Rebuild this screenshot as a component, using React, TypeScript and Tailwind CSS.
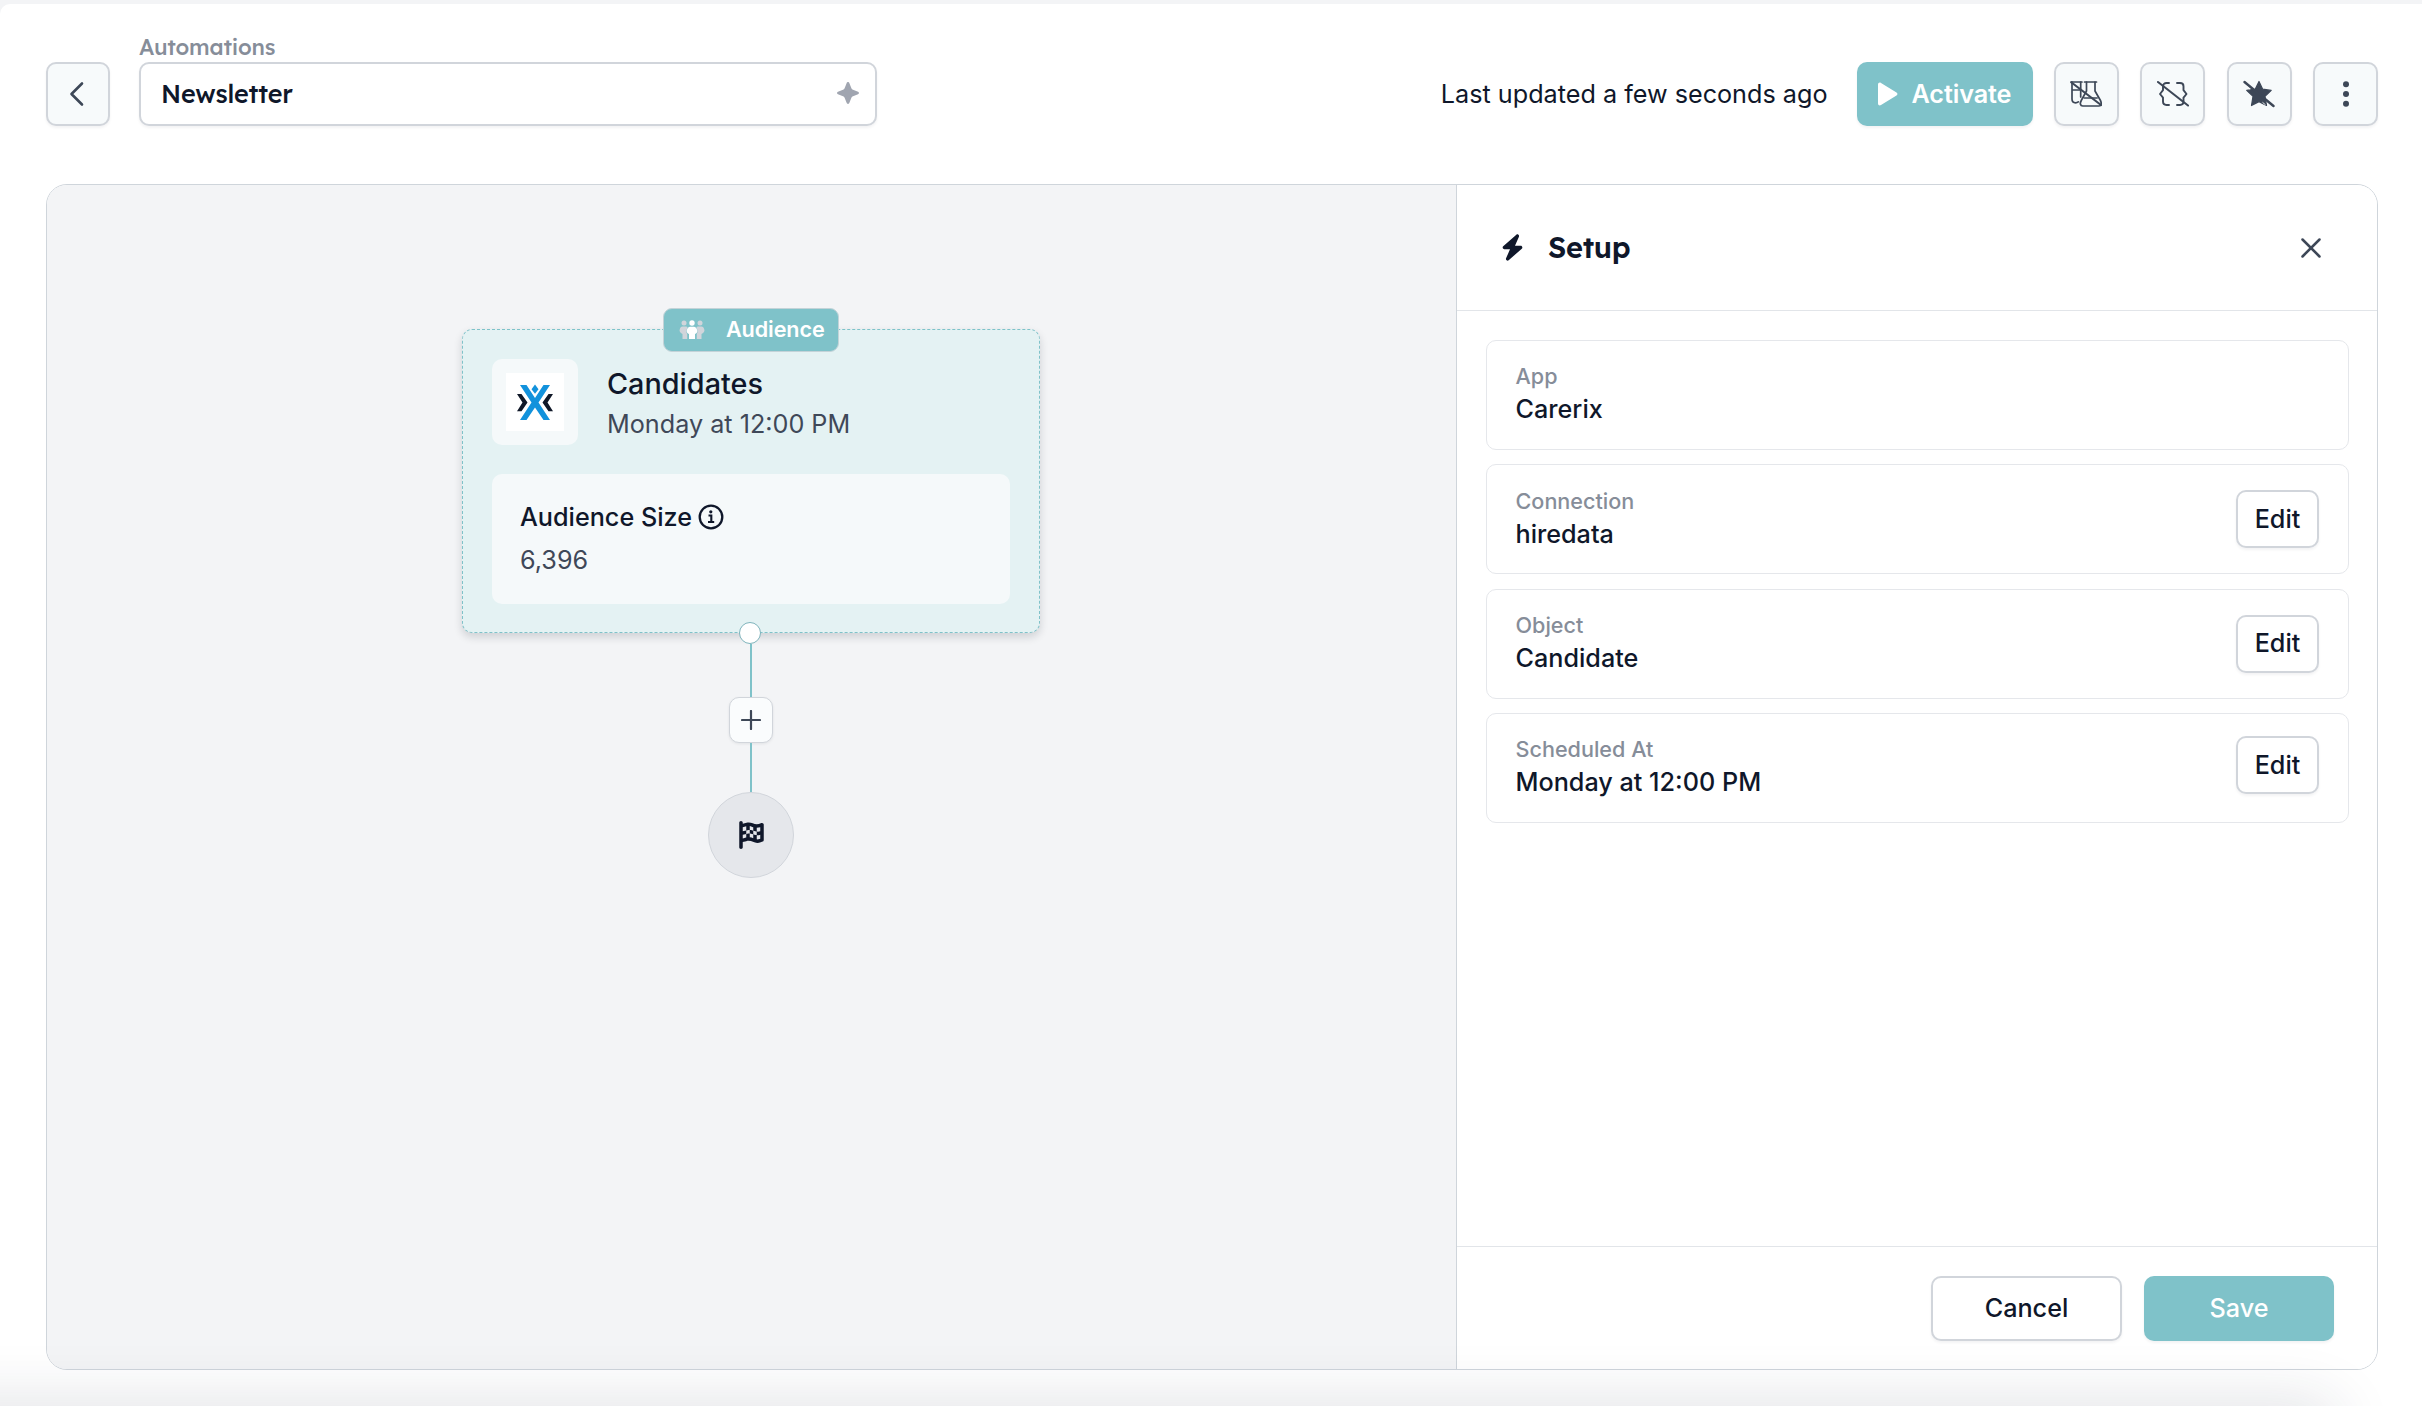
import React from "react";
import { FaBolt, FaFlagCheckered } from "react-icons/fa6";

const LEXEND = "font-['Lexend','Inter',sans-serif] [font-feature-settings:'cv11','ss03']";

function ToolButton({ children, label }: { children: React.ReactNode; label: string }) {
  return (
    <button
      aria-label={label}
      className="flex h-[64px] w-[65px] shrink-0 items-center justify-center rounded-[10px] border-2 border-[#d1d5db] bg-[#f7fafb] text-[#3d4757] shadow-[0_2px_3px_rgba(16,24,40,0.05)]"
    >
      {children}
    </button>
  );
}

function VialsSlash() {
  return (
    <svg width="32" height="28" viewBox="0 0 32 28" fill="none" stroke="currentColor" strokeWidth="1.7" strokeLinecap="round" strokeLinejoin="round">
      <path d="M1 2h11M14.5 2h12" />
      <path d="M2 2v17c0 2.5 1.5 3.800 3.600 3.800 1.200 0 2-.3 2.700-.9M10.700 2v15M2 10h8.700" />
      <path d="M16.500 2v9l-5 9c-2 3.500-1.200 6 1.200 6h16.300c2.300 0 3-2.500 1.200-6l-5.200-9V2M14.500 18h12.500" />
      <path d="M1.500 2.500L31 25" strokeWidth="2.200" />
    </svg>
  );
}

function BracesSlash() {
  return (
    <svg width="32" height="28" viewBox="0 0 32 28" fill="none" stroke="currentColor" strokeWidth="1.9" strokeLinecap="round" strokeLinejoin="round">
      <path d="M12 3H9.500C7.500 3 6 4.200 6 6.200v4L3 14l3 3.600v4C6 24 7.300 25 9.500 25H12" />
      <path d="M20 3h3c2 0 3.500 1.200 3.500 3.200v4L29.500 14l-3 3.600v4c0 2.400-1.300 3.400-3.500 3.400h-3" />
      <path d="M1 2l30 23.500" strokeWidth="2.100" />
    </svg>
  );
}

function StarSlash() {
  return (
    <svg width="32" height="28" viewBox="0 0 32 28" fill="currentColor">
      <path
        d="M16 1.500l3.700 7.700 8.500 1.200-6.200 5.900 1.500 9.200L16 21.800l-7.500 3.700L10 16.300 3.700 10.400l8.500-1.200z"
        stroke="currentColor"
        strokeWidth="1.200"
        strokeLinejoin="round"
      />
      <path d="M1.500 2l29 24" stroke="currentColor" strokeWidth="2.400" strokeLinecap="round" />
      <path d="M2 5.200l5 4M19.500 22.300l3 2.500" stroke="#f7fafb" strokeWidth="0.900" />
    </svg>
  );
}

function People() {
  return (
    <svg width="26" height="20" viewBox="0 0 26 20">
      <g fill="#d1d5db">
        <circle cx="5" cy="3" r="2.500" />
        <path d="M3.500 6.500h4l1.300 1.300C7 10 7.200 12.500 8.200 14v5H3.500v-5C1 13 0 11 .8 9.300 1.300 7.500 2 6.500 3.500 6.500z" />
        <circle cx="21" cy="3" r="2.500" />
        <path d="M22.500 6.500h-4l-1.300 1.300c1.800 2.200 1.600 4.700.6 6.200v5h4.700v-5c2.500-1 3.500-3 2.700-4.700-.5-1.800-1.200-2.800-2.700-2.800z" />
      </g>
      <g fill="#ffffff">
        <circle cx="13" cy="3" r="2.700" />
        <path d="M11.300 6.700h3.400c2 0 3.300 2 3.600 4 .2 1.500-.8 2.600-2.300 3.300v5h-6v-5c-1.500-.7-2.500-1.800-2.300-3.300.3-2 1.600-4 3.600-4z" />
      </g>
    </svg>
  );
}

function Logo() {
  return (
    <svg width="58" height="58" viewBox="0 0 58 58">
      <path d="M14 12h6.500L29 25l8.500-13H44L32.500 29.500 44 47h-6.500L29 34.500 20.500 47H14l11.500-17.500z" fill="#1292dc" />
      <path d="M29 11.500l3.500 4.700L29 20.800l-3.500-4.600z" fill="#1292dc" />
      <path d="M11 21h4.500l6 8.600-6 8.600H11l5.500-8.600zM47 21h-4.500l-6 8.600 6 8.600H47l-5.500-8.600z" fill="#101828" />
    </svg>
  );
}

function Header() {
  return (
    <header className="flex h-[122px] items-end pr-[44px] pl-[46px]">
      <button
        aria-label="Back"
        className="flex h-[64px] w-[64px] items-center justify-center rounded-[10px] border-2 border-[#d1d5db] bg-[#f7fafb] pr-[3px] text-[#3d4757] shadow-[0_2px_3px_rgba(16,24,40,0.05)]"
      >
        <svg width="16" height="26" viewBox="0 0 16 26" fill="none" stroke="currentColor" strokeWidth="2.600" strokeLinecap="round" strokeLinejoin="round">
          <path d="M13 2.500L2.500 13l10.500 10.500" />
        </svg>
      </button>
      <div className="ml-[29px] w-[738px]">
        <div className={`${LEXEND} h-[28px] text-[22px] leading-[26px] font-medium tracking-[-0.2px] text-[#868d99]`}>Automations</div>
        <div className="flex h-[64px] items-center justify-between rounded-[10px] border-2 border-[#d1d5db] bg-white pr-[16px] pl-[20px] shadow-[0_2px_3px_rgba(16,24,40,0.05)]">
          <span className={`${LEXEND} text-[25.2px] font-medium tracking-[-0.15px] text-[#0f172a]`}>Newsletter</span>
          <svg width="22" height="22" viewBox="0 0 22 22" fill="#a0a5b0" className="mb-[3px]">
            <path d="M11 0c.8 0 1.200.6 1.500 1.400l2 5 .9 1.100 5 2c1 .4 1.600.8 1.600 1.500s-.6 1.100-1.600 1.500l-5 2-.9 1.100-2 5c-.3.800-.7 1.400-1.500 1.400s-1.200-.6-1.500-1.400l-2-5-.9-1.100-5-2C.6 12.100 0 11.700 0 11s.6-1.100 1.600-1.500l5-2 .9-1.100 2-5C9.800.6 10.200 0 11 0z" />
          </svg>
        </div>
      </div>
      <div className="ml-auto flex items-center">
        <span className="mr-[29px] pt-[2px] text-[25.2px] whitespace-nowrap text-[#0f172a]">Last updated a few seconds ago</span>
        <button className="mr-[21px] flex h-[64px] w-[176px] items-center rounded-[10px] bg-[#7fc2c9] pl-[21px] text-[25.2px] font-semibold text-white shadow-[0_2px_3px_rgba(16,24,40,0.05)]">
          <svg width="20" height="24" viewBox="0 0 20 24" fill="currentColor" className="mr-[14px]">
            <path d="M0 2.500C0 .8 1.600 0 3 .9l15.500 9.700c1.300.8 1.300 2 0 2.800L3 23.100c-1.400.9-3 .1-3-1.600z" />
          </svg>
          <span className="pt-[1px] tracking-[-0.1px]">Activate</span>
        </button>
        <div className="flex gap-[21.500px]">
          <ToolButton label="Test mode off">
            <VialsSlash />
          </ToolButton>
          <ToolButton label="Variables off">
            <BracesSlash />
          </ToolButton>
          <ToolButton label="Not a favorite">
            <StarSlash />
          </ToolButton>
          <ToolButton label="More">
            <svg width="8" height="26" viewBox="0 0 8 26" fill="currentColor">
              <circle cx="4" cy="3.200" r="3" />
              <circle cx="4" cy="13" r="3" />
              <circle cx="4" cy="22.800" r="3" />
            </svg>
          </ToolButton>
        </div>
      </div>
    </header>
  );
}

function Canvas() {
  return (
    <section className="flex w-[1409px] shrink-0 flex-col items-center bg-[#f3f4f6] pt-[144px] pr-[1px]">
      <div className="relative h-[304px] w-[578px] rounded-[10px] border border-dashed border-[#7fc2c9] bg-[#e4f2f3] px-[29px] pt-[29px] shadow-[0_4px_8px_rgba(16,24,40,0.16)]">
        <div className="absolute top-[-22px] left-[200px] flex h-[44px] w-[176px] items-center rounded-[9px] border border-[#c3d3d8] bg-[#7fc2c9] pl-[15px] text-[21.600px] font-semibold text-white">
          <People />
          <span className="ml-[21px] pb-[2px] tracking-[-0.1px]">Audience</span>
        </div>
        <div className="flex">
          <div className="flex h-[86px] w-[86px] items-center justify-center rounded-[10px] bg-[#f5f9fa]">
            <div className="bg-white">
              <Logo />
            </div>
          </div>
          <div className="ml-[29px] pt-[5px]">
            <div className="text-[28.800px] leading-[40px] font-medium text-[#0f172a]">Candidates</div>
            <div className="text-[25.200px] leading-[40px] text-[#3f4858]">Monday at 12:00 PM</div>
          </div>
        </div>
        <div className="mt-[29px] h-[130px] w-[518px] rounded-[10px] bg-[#f5f9fa] px-[28px] pt-[22px]">
          <div className="flex items-center text-[25.200px] leading-[42px] font-medium text-[#0f172a]">
            Audience Size
            <svg width="26" height="26" viewBox="0 0 26 26" fill="none" stroke="currentColor" className="ml-[6px]">
              <circle cx="13" cy="13" r="11.300" strokeWidth="2.300" />
              <path d="M10.500 11.500h2.800v6.300M10 18h6.200" strokeWidth="2.100" />
              <circle cx="12.800" cy="7.800" r="1.600" fill="currentColor" stroke="none" />
            </svg>
          </div>
          <div className="text-[25.200px] leading-[45px] text-[#3f4858]">6,396</div>
        </div>
        <div className="absolute bottom-[-12px] left-[276px] h-[22px] w-[22px] rounded-full border border-[#7fb4bc] bg-white" />
      </div>
      <div className="mt-[11px] h-[53px] w-[2px] bg-[#7fc2c9]" />
      <div className="flex h-[46px] w-[44px] items-center justify-center rounded-[10px] border-[1.500px] border-[#d1d5db] bg-[#fafcfd] shadow-[0_1px_3px_rgba(16,24,40,0.08)]">
        <svg width="20" height="20" viewBox="0 0 20 20" stroke="#3d4757" strokeWidth="2.200" strokeLinecap="round">
          <path d="M10 1v18M1 10h18" />
        </svg>
      </div>
      <div className="h-[49px] w-[2px] bg-[#7fc2c9]" />
      <div className="flex h-[86px] w-[86px] items-center justify-center rounded-full border border-[#d1d5db] bg-[#e5e7eb]">
        <FaFlagCheckered className="h-[28px] w-[25px] text-[#0f172a]" />
      </div>
    </section>
  );
}

type Row = { label: string; value: string; button?: string };

const rows: Row[] = [
  { label: "App", value: "Carerix" },
  { label: "Connection", value: "hiredata", button: "mt-[25px]" },
  { label: "Object", value: "Candidate", button: "mt-[25px]" },
  { label: "Scheduled At", value: "Monday at 12:00 PM", button: "mt-[22px]" },
];

function SetupPanel() {
  return (
    <aside className="flex flex-1 flex-col border-l border-[#cfd5db] bg-white">
      <div className="flex h-[126px] items-center border-b border-[#e2e5e9] pr-[56px] pl-[44px] text-[#0f172a]">
        <FaBolt className="h-[29px] w-[23px]" />
        <h2 className={`${LEXEND} ml-[24px] text-[29px] font-semibold tracking-[-0.3px]`}>Setup</h2>
        <svg width="20" height="20" viewBox="0 0 20 20" className="ml-auto" stroke="#3d4757" strokeWidth="2.500" strokeLinecap="round">
          <path d="M1.500 1.500l17 17M18.500 1.500l-17 17" />
        </svg>
      </div>
      <div className="flex flex-1 flex-col gap-[14.400px] pt-[29px] pr-[28px] pl-[29px]">
        {rows.map((row) => (
          <div key={row.label} className="flex h-[110px] items-start justify-between rounded-[10px] border border-[#e5e7eb] pr-[29px] pl-[28.500px]">
            <div className="pt-[21.300px]">
              <div className="text-[21.600px] leading-[29px] font-medium text-[#868d99]">{row.label}</div>
              <div className="text-[25.200px] leading-[36px] font-medium text-[#0f172a]">{row.value}</div>
            </div>
            {row.button && (
              <button
                className={`${row.button} flex h-[58px] w-[83px] items-center justify-center rounded-[10px] border-2 border-[#d1d5db] bg-white pt-[1px] text-[25.200px] font-medium text-[#0f172a] shadow-[0_2px_3px_rgba(16,24,40,0.05)]`}
              >
                Edit
              </button>
            )}
          </div>
        ))}
      </div>
      <div className="flex h-[123px] justify-end gap-[22px] border-t border-[#e2e5e9] pt-[29px] pr-[43px]">
        <button className="h-[65px] w-[191px] rounded-[10px] border-2 border-[#d1d5db] bg-white text-[25.200px] font-medium text-[#0f172a] shadow-[0_2px_3px_rgba(16,24,40,0.05)]">
          Cancel
        </button>
        <button className="h-[65px] w-[190px] rounded-[10px] bg-[#7fc2c9] text-[25.200px] font-medium text-white shadow-[0_2px_3px_rgba(16,24,40,0.05)]">
          Save
        </button>
      </div>
    </aside>
  );
}

export default function App() {
  return (
    <div className="relative h-[1406px] w-[2422px] overflow-hidden bg-[#f3f4f6] pt-[4px] font-['Inter',sans-serif]">
      <div className="h-full rounded-tl-[10px] bg-white">
        <Header />
        <main className="mt-[58px] ml-[46px] flex h-[1186px] w-[2332px] overflow-hidden rounded-[21px] border border-[#cfd5db]">
          <Canvas />
          <SetupPanel />
        </main>
      </div>
      <div className="pointer-events-none absolute bottom-[-60px] left-[-80px] h-[60px] w-[2420px] rounded-[40px] shadow-[0_-6px_60px_rgba(30,41,59,0.13)]" />
    </div>
  );
}
